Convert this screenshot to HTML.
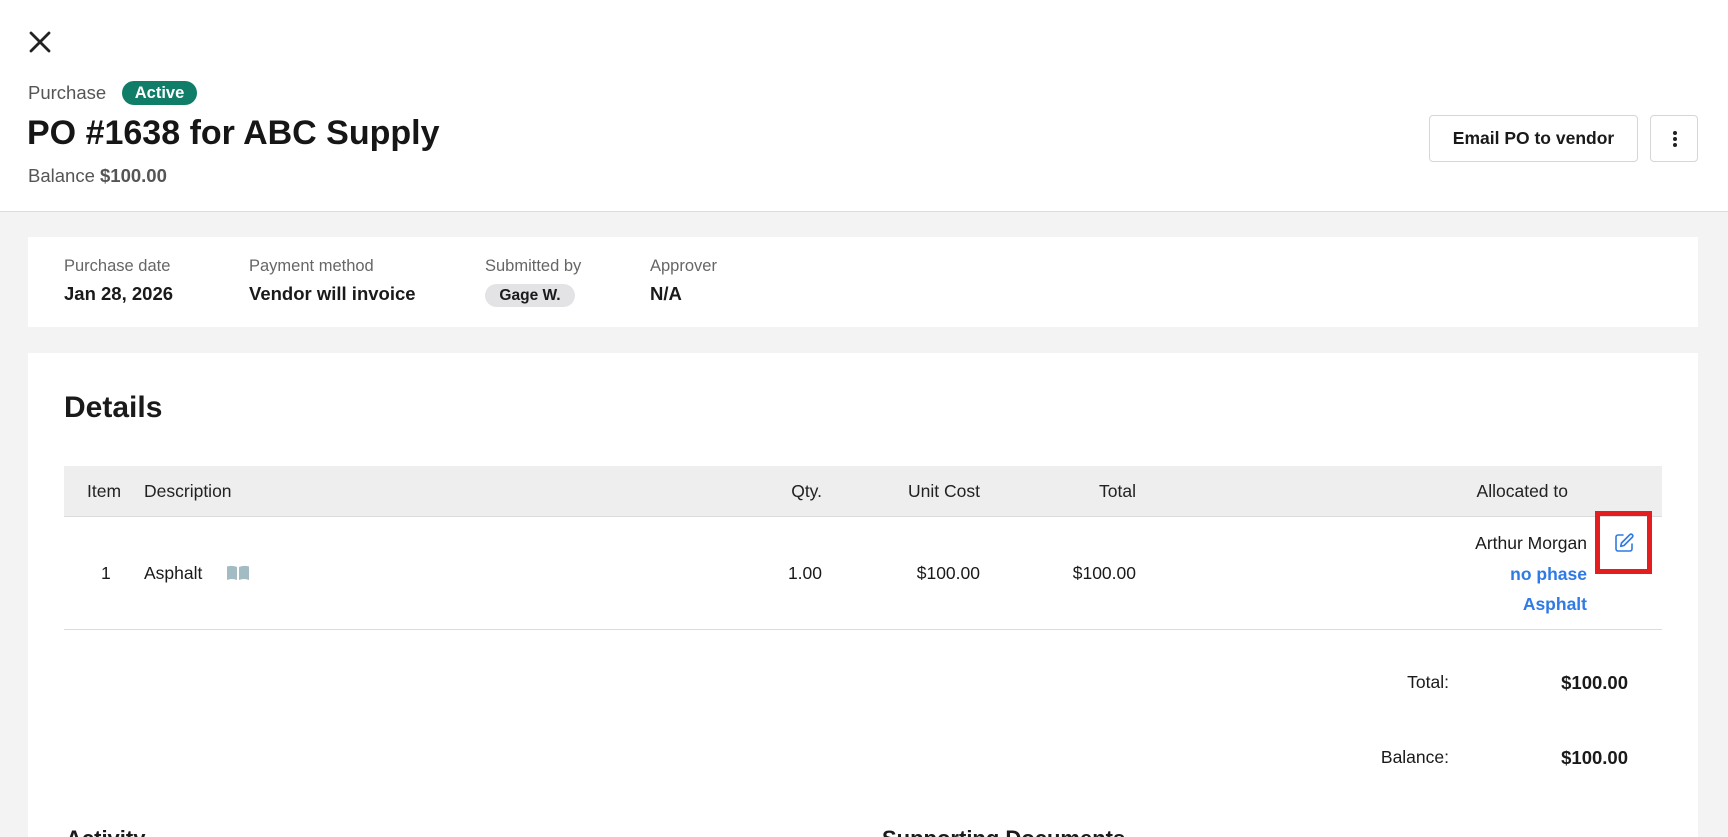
<!DOCTYPE html>
<html style="overflow:hidden;height:837px"><head><meta charset="utf-8"><style>
*{margin:0;padding:0;box-sizing:border-box}
body{width:1728px;height:837px;overflow:hidden;background:#f3f3f3;font-family:"Liberation Sans",Arial,sans-serif;color:#1a1a1a;position:relative}
.a{position:absolute;white-space:nowrap}
.hdr{position:absolute;left:0;top:0;width:1728px;height:212px;background:#fff;border-bottom:1px solid #dcdcdc}
.card{position:absolute;background:#fff}
.lbl{font-size:16.5px;color:#666}
.val{font-size:18.5px;font-weight:600;color:#1a1a1a}
.th{font-size:17.5px;color:#222}
.td{font-size:17.5px;color:#1a1a1a}
.r{text-align:right}
.blue{color:#2f7ae5;font-weight:bold;font-size:17.5px}
</style></head><body>
<div class="hdr">
  <svg class="a" style="left:29px;top:31px" width="22" height="22" viewBox="0 0 22 22"><path d="M2 2L20 20M20 2L2 20" stroke="#222" stroke-width="2.8" stroke-linecap="round"/></svg>
  <div class="a" style="left:28px;top:82px;font-size:18.5px;color:#555">Purchase</div>
  <div class="a" style="left:122px;top:81px;width:75px;height:24px;border-radius:12px;background:#0f7d68;color:#fff;font-weight:bold;font-size:16.5px;text-align:center;line-height:24px">Active</div>
  <div class="a" style="left:27px;top:114px;font-size:34px;font-weight:bold;color:#161616">PO #1638 for ABC Supply</div>
  <div class="a" style="left:28px;top:165px;font-size:18.5px;color:#555">Balance <b>$100.00</b></div>
  <div class="a" style="left:1429px;top:115px;width:209px;height:47px;border:1px solid #d6d6d6;border-radius:4px;font-size:17.5px;font-weight:600;text-align:center;line-height:45px">Email PO to vendor</div>
  <div class="a" style="left:1650px;top:115px;width:48px;height:47px;border:1px solid #d6d6d6;border-radius:4px">
    <svg style="position:absolute;left:21px;top:13px" width="6" height="20" viewBox="0 0 6 20"><circle cx="3" cy="4" r="2" fill="#222"/><circle cx="3" cy="10" r="2" fill="#222"/><circle cx="3" cy="16" r="2" fill="#222"/></svg>
  </div>
</div>

<div class="card" style="left:28px;top:237px;width:1670px;height:90px"></div>
<div class="a lbl" style="left:64px;top:257px">Purchase date</div>
<div class="a val" style="left:64px;top:283px">Jan 28, 2026</div>
<div class="a lbl" style="left:249px;top:257px">Payment method</div>
<div class="a val" style="left:249px;top:283px">Vendor will invoice</div>
<div class="a lbl" style="left:485px;top:257px">Submitted by</div>
<div class="a" style="left:485px;top:284px;width:90px;height:23px;border-radius:12px;background:#e3e3e6;font-size:15.5px;font-weight:600;text-align:center;line-height:23px">Gage W.</div>
<div class="a lbl" style="left:650px;top:257px">Approver</div>
<div class="a val" style="left:650px;top:283px">N/A</div>

<div class="card" style="left:28px;top:353px;width:1670px;height:484px"></div>
<div class="a" style="left:64px;top:391px;font-size:30px;font-weight:bold">Details</div>

<div class="a" style="left:64px;top:466px;width:1598px;height:51px;background:#eeeeee;border-bottom:1px solid #dcdcdc"></div>
<div class="a th" style="left:87px;top:481px">Item</div>
<div class="a th" style="left:144px;top:481px">Description</div>
<div class="a th r" style="left:722px;width:100px;top:481px">Qty.</div>
<div class="a th r" style="left:860px;width:120px;top:481px">Unit Cost</div>
<div class="a th r" style="left:1036px;width:100px;top:481px">Total</div>
<div class="a th r" style="left:1400px;width:168px;top:481px">Allocated to</div>

<div class="a" style="left:64px;top:629px;width:1598px;height:1px;background:#dcdcdc"></div>
<div class="a td" style="left:101px;top:563px">1</div>
<div class="a td" style="left:144px;top:563px">Asphalt</div>
<svg class="a" style="left:226px;top:565px" width="24" height="16" viewBox="0 0 24 16"><path d="M1 1.5Q6 0 11 2V15Q6 13 1 15Z M13 2Q18 0 23 1.5V15Q18 13 13 15Z" fill="#a3bcc4"/></svg>
<div class="a td r" style="left:722px;width:100px;top:563px">1.00</div>
<div class="a td r" style="left:860px;width:120px;top:563px">$100.00</div>
<div class="a td r" style="left:1036px;width:100px;top:563px">$100.00</div>
<div class="a td r" style="left:1400px;width:187px;top:533px">Arthur Morgan</div>
<div class="a blue r" style="left:1400px;width:187px;top:564px">no phase</div>
<div class="a blue r" style="left:1400px;width:187px;top:594px">Asphalt</div>
<div class="a" style="left:1595px;top:511px;width:57px;height:63px;border:5px solid #e41e1e"></div>
<svg class="a" style="left:1613px;top:532px" width="22" height="22" viewBox="0 0 22 22" fill="none" stroke="#2f7ae5" stroke-width="1.6" stroke-linecap="round" stroke-linejoin="round"><path d="M10 3H5a2 2 0 0 0-2 2v12a2 2 0 0 0 2 2h12a2 2 0 0 0 2-2v-5"/><path d="M17 2.5a1.8 1.8 0 0 1 2.5 2.5L11 13.5l-3.3.8.8-3.3z"/></svg>

<div class="a td r" style="left:1300px;width:149px;top:672px">Total:</div>
<div class="a r" style="left:1480px;width:148px;top:672px;font-size:18.5px;font-weight:bold">$100.00</div>
<div class="a td r" style="left:1300px;width:149px;top:747px">Balance:</div>
<div class="a r" style="left:1480px;width:148px;top:747px;font-size:18.5px;font-weight:bold">$100.00</div>

<div class="a" style="left:66px;top:826px;font-size:22px;font-weight:bold">Activity</div>
<div class="a" style="left:882px;top:826px;font-size:22px;font-weight:bold">Supporting Documents</div>
</body></html>
